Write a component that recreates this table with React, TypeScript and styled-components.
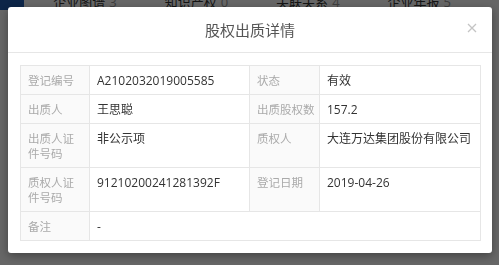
import React from "react";
import styled, { createGlobalStyle } from "styled-components";

const GlobalStyle = createGlobalStyle`
  html, body { margin: 0; padding: 0; }
  body {
    background: #fff;
    font-family: "Open Sans", "Noto Sans CJK SC", sans-serif;
    overflow: hidden;
  }
`;

/* ─── Page behind the dialog ─────────────────────────── */
const TabBar = styled.div`
  display: flex;
  align-items: center;
  height: 18px;
  margin-top: -8px;
`;

const Logo = styled.div`
  width: 25px;
  height: 18px;
  background: #1e5cb3;
  margin-right: 29px;
`;

const Tab = styled.div`
  width: 115px;
  font-size: 13px;
  color: #333;
  white-space: nowrap;
  span { color: #999; margin-left: 4px; }
`;

/* ─── Dialog ─────────────────────────────────────────── */
const Overlay = styled.div`
  position: fixed;
  inset: 0;
  background: rgba(0, 0, 0, 0.6);
  padding: 7px 7px 0 8px;
`;

const Dialog = styled.div`
  width: 484px;
  background: #fff;
  border-radius: 3px;
  box-shadow: 0 3px 10px rgba(0, 0, 0, 0.35);
`;

const Header = styled.div`
  position: relative;
  height: 45px;
  display: flex;
  align-items: center;
  justify-content: center;
  border-bottom: 1px solid #e6e6e6;
`;

const Title = styled.h3`
  margin: 0;
  font-weight: 400;
  font-size: 15px;
  color: #555;
`;

const Close = styled.button`
  position: absolute;
  right: 14px;
  top: 15px;
  width: 12px;
  height: 12px;
  padding: 0;
  border: none;
  background: none;
  cursor: pointer;
`;

const Body = styled.div`
  padding: 12px;
`;

const Table = styled.table`
  width: 460px;
  border-collapse: collapse;
  table-layout: fixed;
  font-size: 12px;
  line-height: 15px;
`;

const Cell = styled.td<{ $label?: boolean }>`
  border: 1px solid #e6e6e6;
  height: 15px;
  padding: 7px 6px 6px 7px;
  vertical-align: top;
  text-align: left;
  white-space: pre;
  overflow: hidden;
  background: ${(p) => (p.$label ? "#fafafa" : "#fff")};
  color: ${(p) => (p.$label ? "#aaa" : "#333")};
  font-size: ${(p) => (p.$label ? "11.5px" : "12px")};
`;

const rows: [string, string, string?, string?][] = [
  ["登记编号", "A2102032019005585", "状态", "有效"],
  ["出质人", "王思聪", "出质股权数", "157.2"],
  ["出质人证\n件号码", "非公示项", "质权人", "大连万达集团股份有限公司"],
  ["质权人证\n件号码", "91210200241281392F", "登记日期", "2019-04-26"],
  ["备注", "-"],
];

const tabs = [
  ["企业图谱", 3],
  ["知识产权", 0],
  ["关联关系", 4],
  ["企业年报", 5],
];

export default function App() {
  return (
    <>
      <GlobalStyle />
      <TabBar>
        <Logo />
        {tabs.map(([name, n]) => (
          <Tab key={name}>
            {name}
            <span>{n}</span>
          </Tab>
        ))}
      </TabBar>

      <Overlay>
        <Dialog>
          <Header>
            <Title>股权出质详情</Title>
            <Close aria-label="close">
              <svg width="12" height="12" viewBox="0 0 12 12">
                <path d="M2 2L10 10M10 2L2 10" stroke="#c4c4c4" strokeWidth="1.3" />
              </svg>
            </Close>
          </Header>
          <Body>
            <Table>
              <colgroup>
                <col style={{ width: 69 }} />
                <col style={{ width: 160 }} />
                <col style={{ width: 70 }} />
                <col style={{ width: 161 }} />
              </colgroup>
              <tbody>
                {rows.map(([l1, v1, l2, v2]) => (
                  <tr key={l1}>
                    <Cell $label>{l1}</Cell>
                    {l2 ? (
                      <>
                        <Cell>{v1}</Cell>
                        <Cell $label>{l2}</Cell>
                        <Cell>{v2}</Cell>
                      </>
                    ) : (
                      <Cell colSpan={3}>{v1}</Cell>
                    )}
                  </tr>
                ))}
              </tbody>
            </Table>
          </Body>
        </Dialog>
      </Overlay>
    </>
  );
}
